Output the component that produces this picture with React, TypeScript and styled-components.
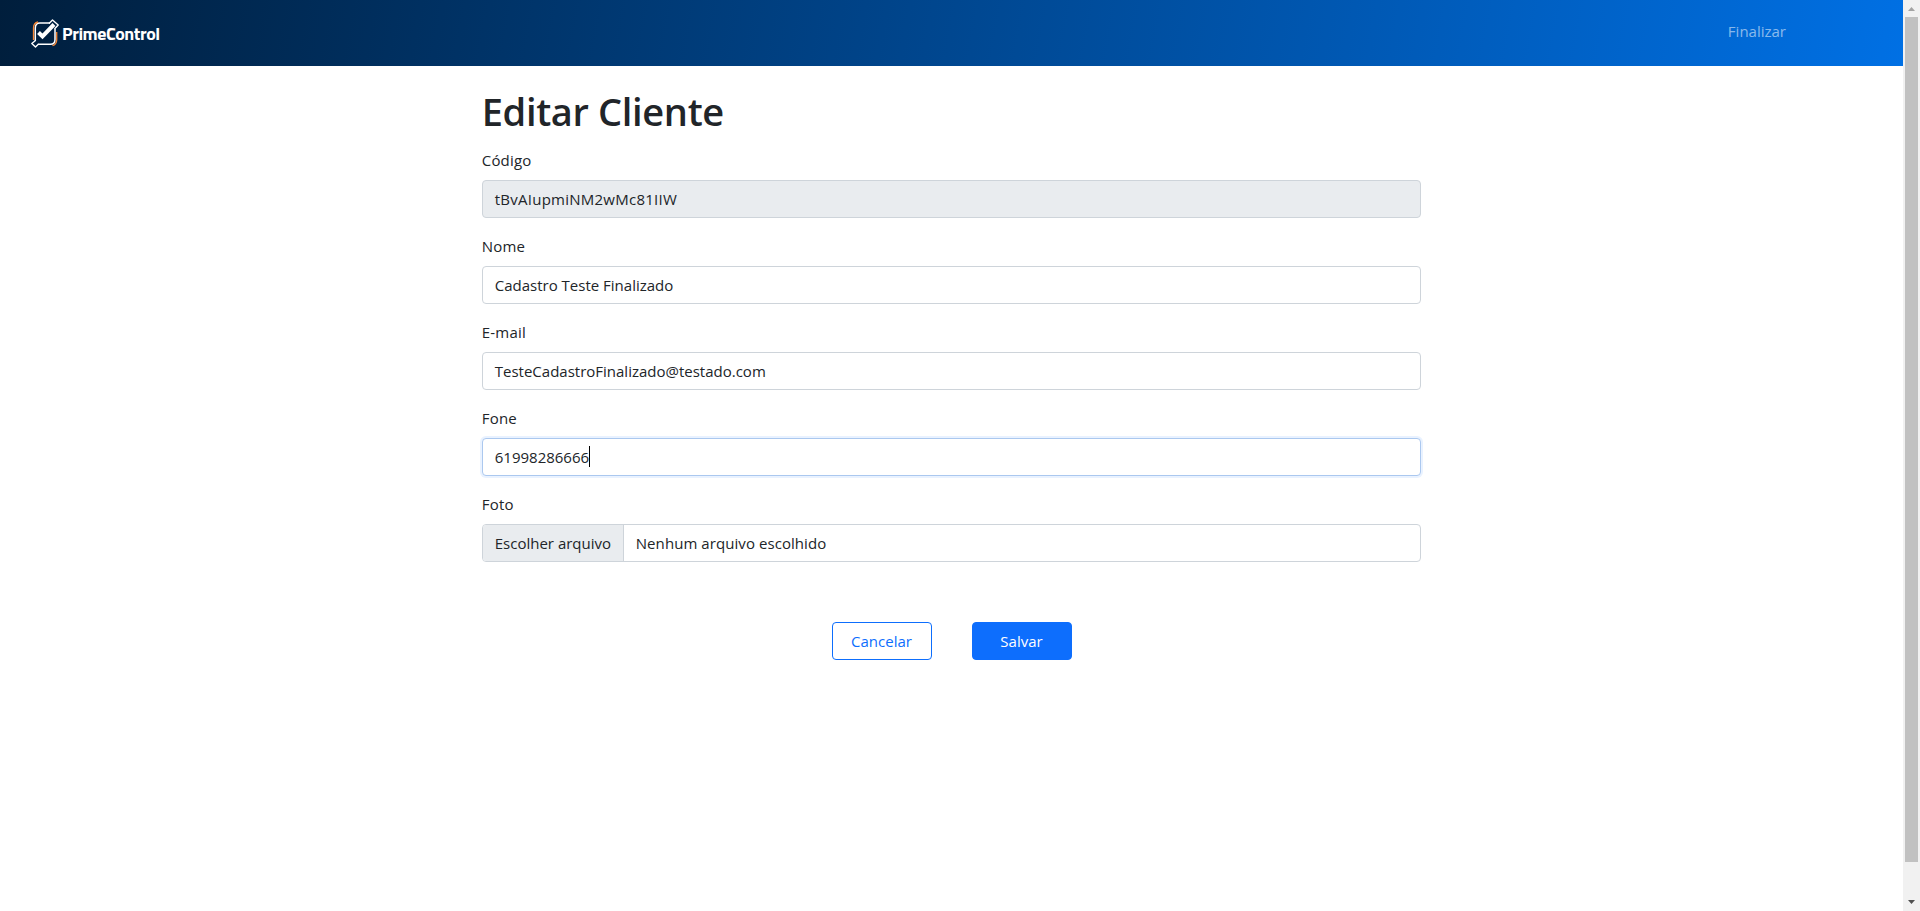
import React from "react";
import styled, { createGlobalStyle, css } from "styled-components";

const GlobalStyle = createGlobalStyle`
  *, *::before, *::after { box-sizing: border-box; }
  html, body { margin: 0; height: 100%; overflow: hidden; }
  body {
    background: #fff;
    color: #212529;
    font: 400 15px/24px "Segoe UI", "Open Sans", sans-serif;
  }
`;

const Screen = styled.div`
  display: flex;
  height: 911px;
`;

const Page = styled.div`
  flex: 1;
  min-width: 0;
`;

const Navbar = styled.header`
  display: flex;
  align-items: center;
  justify-content: space-between;
  height: 66px;
  padding: 0 117px 0 30px;
  background: linear-gradient(101deg, #001e3c, #0070e4);
`;

const Brand = styled.a`
  display: flex;
  align-items: center;
  gap: 3px;
  color: #fff;
`;

const BrandName = styled.span`
  font: 700 18px/22px "Titillium Web", "Open Sans", sans-serif;
  font-stretch: 75%;
  letter-spacing: -0.45px;
  padding-top: 1px;
`;

const NavLink = styled.a`
  color: rgba(255, 255, 255, 0.55);
  padding-bottom: 4px;
`;

const Form = styled.form`
  width: calc(50% - 12px);
  margin: 0 auto;
  padding-top: 21px;
`;

const Title = styled.h1`
  margin: 0 0 13px;
  font-size: 38px;
  line-height: 48px;
  font-weight: 600;
  letter-spacing: -0.35px;
`;

const Field = styled.div`
  margin-bottom: 16px;
`;

const Label = styled.label`
  display: block;
  margin-bottom: 8px;
  letter-spacing: 0.2px;
`;

const Control = styled.div<{ $disabled?: boolean; $focused?: boolean }>`
  display: flex;
  height: 38px;
  border: 1px solid #ced4da;
  border-radius: 4px;
  overflow: hidden;
  background: ${(p) => (p.$disabled ? "#e9ecef" : "#fff")};
  ${(p) =>
    p.$focused &&
    css`
      border-color: #abc8ef;
      box-shadow: 0 0 0 2px rgba(13, 110, 253, 0.09);
    `}
`;

const Value = styled.span<{ $spacing?: number }>`
  padding: 6px 0 6px 12px;
  letter-spacing: ${(p) => p.$spacing ?? 0}px;
`;

const Caret = styled.span`
  width: 1px;
  height: 21px;
  margin-top: 7px;
  background: #000;
`;

const FileButton = styled.span`
  width: 141px;
  padding: 6px 12px;
  border-right: 1px solid #ced4da;
  background: #e9ecef;
  white-space: nowrap;
`;

const Actions = styled.div`
  display: flex;
  justify-content: center;
  gap: 40px;
  margin-top: 60px;
`;

const Button = styled.button<{ $primary?: boolean }>`
  width: 100px;
  height: 38px;
  padding: 0 0 1px;
  border: 1px solid #0d6efd;
  border-radius: 4px;
  font: inherit;
  color: ${(p) => (p.$primary ? "#fff" : "#0d6efd")};
  background: ${(p) => (p.$primary ? "#0d6efd" : "#fff")};
`;

const Scrollbar = styled.div`
  display: flex;
  flex-direction: column;
  align-items: center;
  justify-content: space-between;
  width: 17px;
  background: #f1f1f1;
`;

const Thumb = styled.div`
  width: 13px;
  height: 845px;
  margin-bottom: auto;
  background: #c1c1c1;
`;

const ScrollArrow = styled.svg`
  display: block;
  width: 17px;
  height: 17px;
`;

const Logo = () => (
  <svg width="29" height="30" viewBox="0 0 29 30" fill="none">
    <path d="M5.300 23V10Q5.300 5 10 5H20" stroke="#fff" strokeWidth="1.500" />
    <path d="M3.500 22V10Q3.500 5 8 4" stroke="#f58634" strokeWidth="1.300" />
    <path d="M25 11V21.500Q25 26.300 20.500 26.300H8" stroke="#fff" strokeWidth="1.500" />
    <path d="M26.700 14V22Q26.500 26.500 22.500 27.700" stroke="#f58634" strokeWidth="1.300" />
    <path d="M19 5.500L22.500 2L28.200 7L24.500 11" stroke="#fff" strokeWidth="1.400" strokeLinejoin="round" />
    <path d="M5.500 22.500L1.800 25.500L5.500 29L8.500 26" stroke="#fff" strokeWidth="1.400" strokeLinejoin="round" />
    <path d="M8.500 14.500L12.500 18.500L24 6.500" stroke="#fff" strokeWidth="4" />
  </svg>
);

const fields = [
  { label: "Código", value: "tBvAIupmiNM2wMc81IIW", disabled: true, spacing: 0.25 },
  { label: "Nome", value: "Cadastro Teste Finalizado" },
  { label: "E-mail", value: "TesteCadastroFinalizado@testado.com" },
  { label: "Fone", value: "61998286666", focused: true },
];

export default function App() {
  return (
    <Screen>
      <GlobalStyle />
      <Page>
        <Navbar>
          <Brand>
            <Logo />
            <BrandName>PrimeControl</BrandName>
          </Brand>
          <NavLink>Finalizar</NavLink>
        </Navbar>
        <Form>
          <Title>Editar Cliente</Title>
          {fields.map((f) => (
            <Field key={f.label}>
              <Label>{f.label}</Label>
              <Control $disabled={f.disabled} $focused={f.focused}>
                <Value $spacing={f.spacing}>{f.value}</Value>
                {f.focused && <Caret />}
              </Control>
            </Field>
          ))}
          <Field>
            <Label>Foto</Label>
            <Control>
              <FileButton>Escolher arquivo</FileButton>
              <Value $spacing={0.07}>Nenhum arquivo escolhido</Value>
            </Control>
          </Field>
          <Actions>
            <Button type="button">Cancelar</Button>
            <Button type="button" $primary>Salvar</Button>
          </Actions>
        </Form>
      </Page>
      <Scrollbar>
        <ScrollArrow viewBox="0 0 17 17">
          <path d="M5 11L8.500 7L12 11Z" fill="#a3a3a3" />
        </ScrollArrow>
        <Thumb />
        <ScrollArrow viewBox="0 0 17 17">
          <path d="M5 6L8.500 10L12 6Z" fill="#505050" />
        </ScrollArrow>
      </Scrollbar>
    </Screen>
  );
}
